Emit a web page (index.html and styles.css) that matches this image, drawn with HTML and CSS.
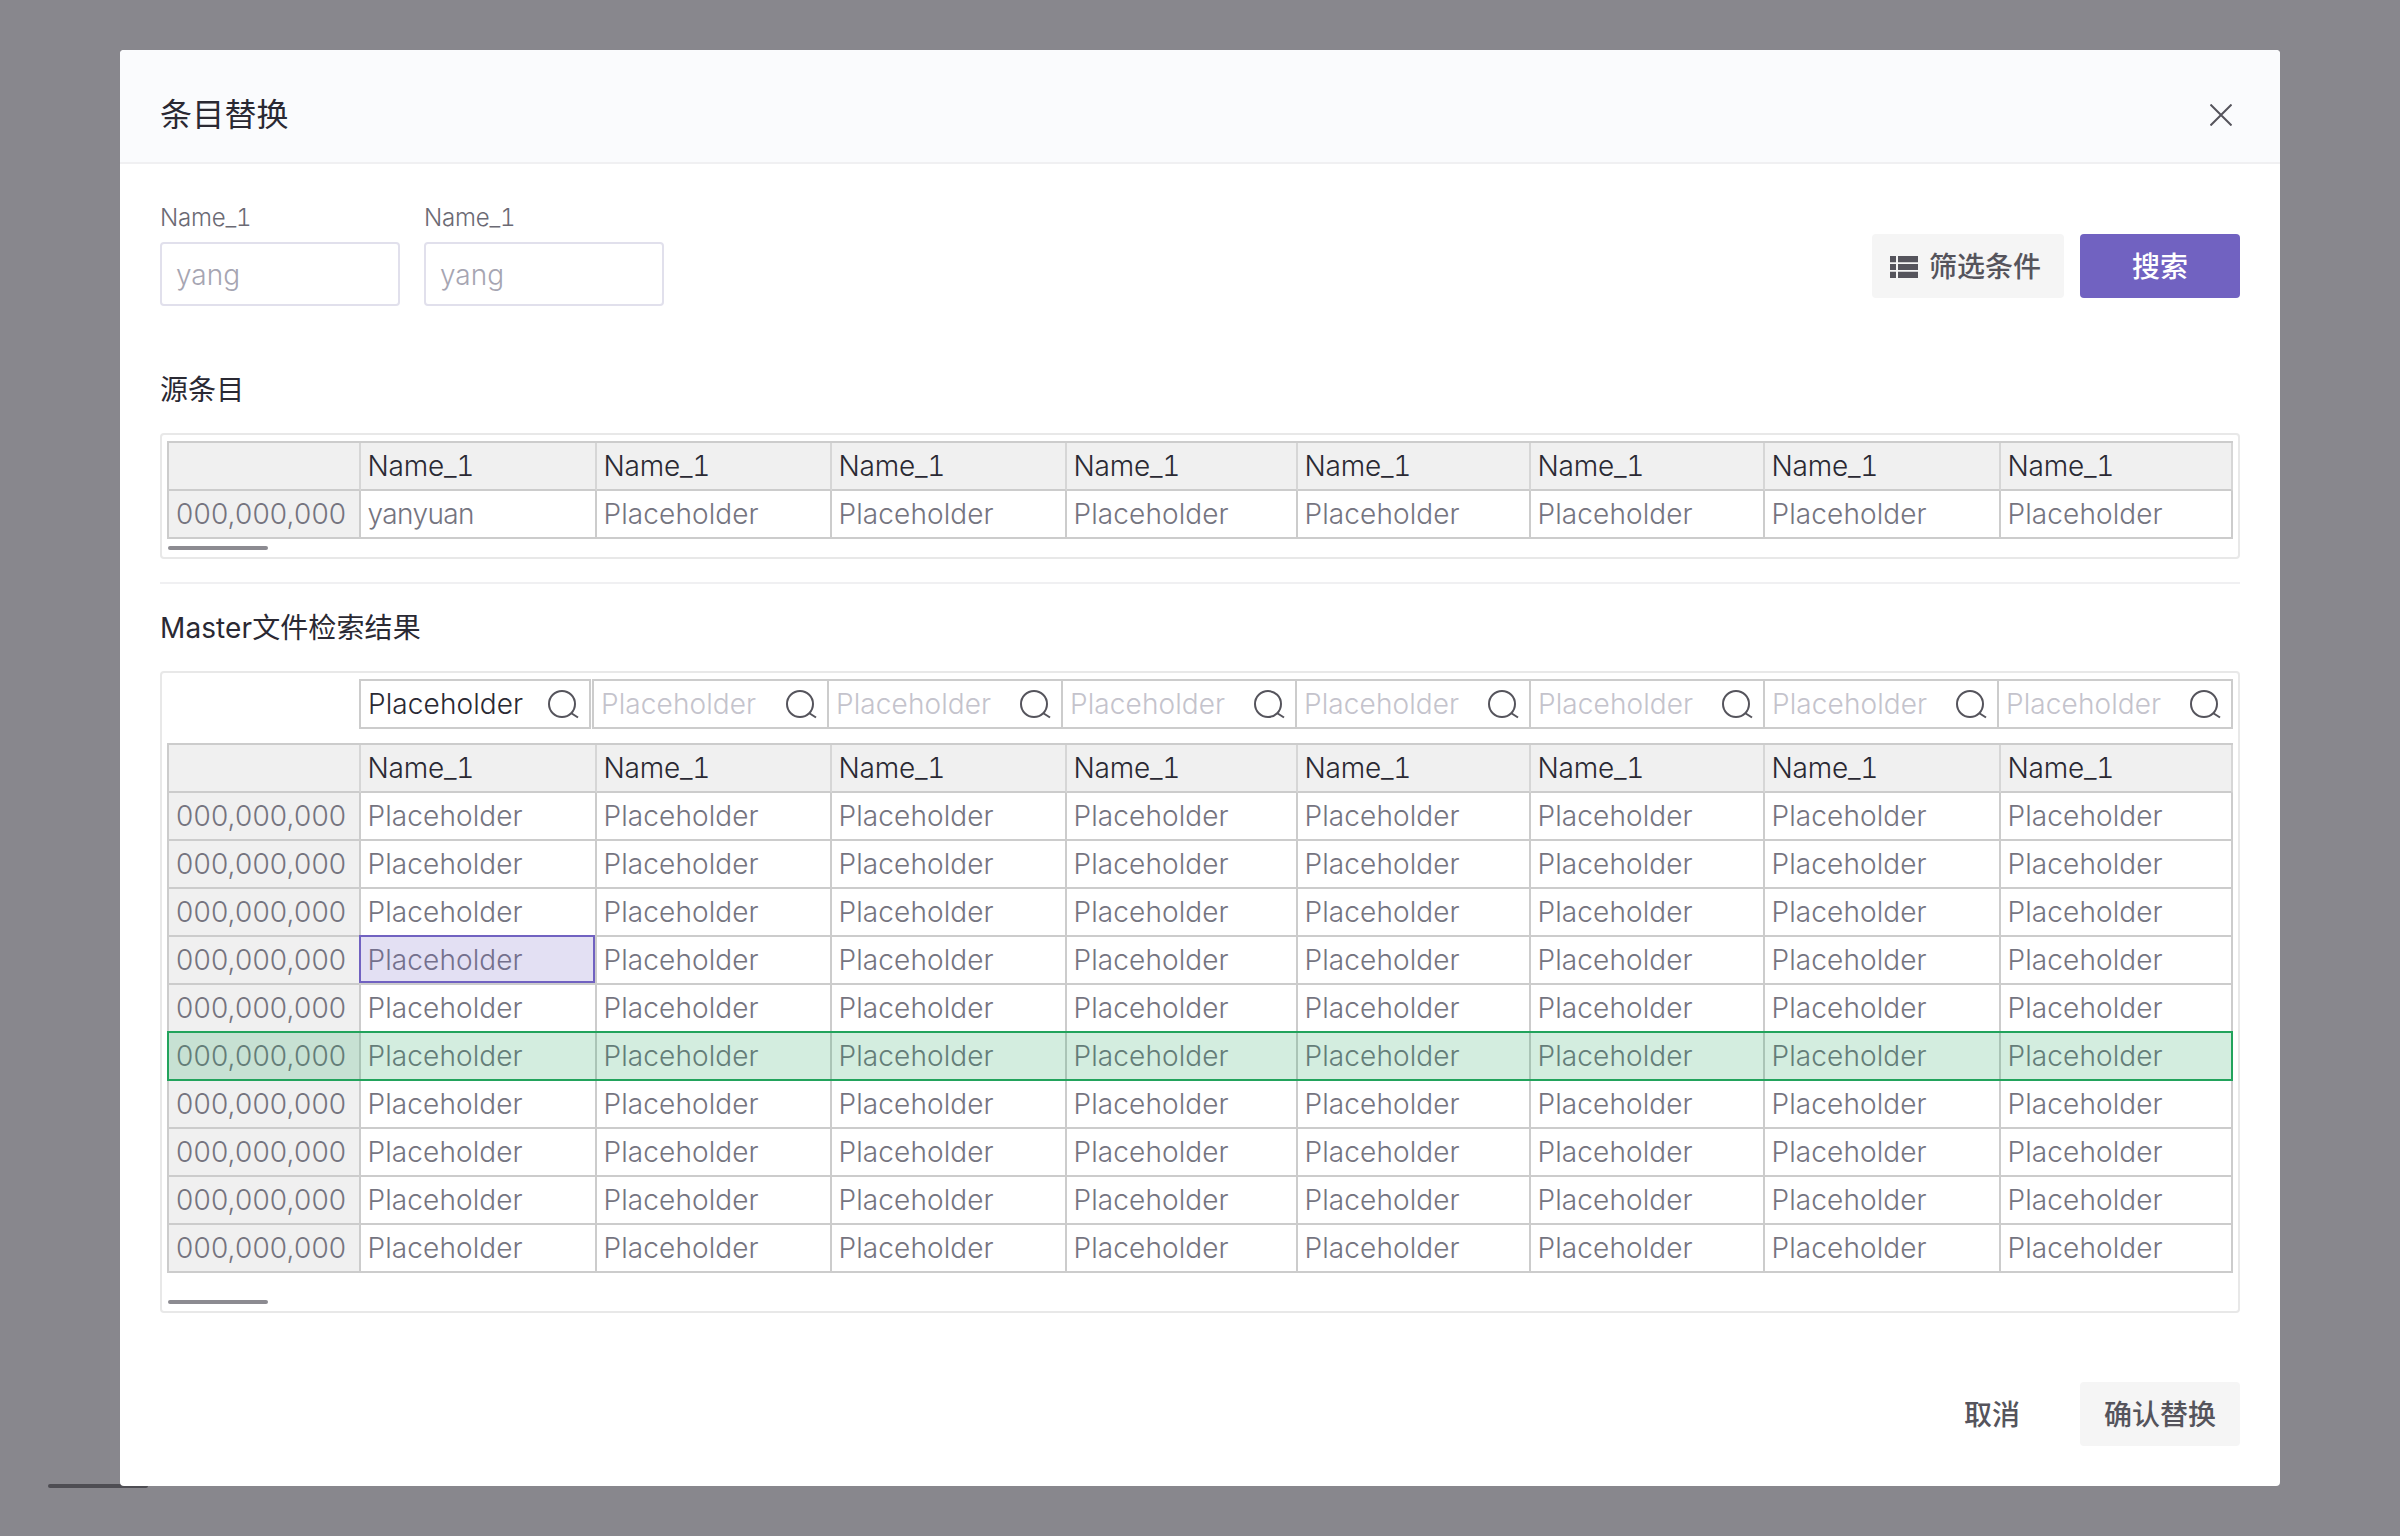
FILE: index.html
```html
<!DOCTYPE html>
<html lang="zh-CN">
<head>
<meta charset="utf-8">
<title>条目替换</title>
<link rel="stylesheet" href="styles.css">
</head>
<body>
<div class="page-scrollbar"></div>
<div class="backdrop">
  <section class="modal">
    <header class="modal-header">
      <h1 class="modal-title">条目替换</h1>
      <svg class="close-icon" width="22" height="22" viewBox="0 0 22 22"><path d="M0.5 0.5L21.5 21.5M21.5 0.5L0.5 21.5"/></svg>
    </header>
    <div class="modal-body">
      <div class="search-bar">
        <div class="fields">
          <label class="field"><span class="field-label">Name_1</span><input class="field-input" placeholder="yang"></label>
          <label class="field"><span class="field-label">Name_1</span><input class="field-input" placeholder="yang"></label>
        </div>
        <div class="search-actions">
          <button class="btn btn-filter"><svg class="list-icon" width="28" height="22" viewBox="0 0 28 22"><path d="M0 0h6v6.3H0zM8 0h20v6.3H8zM0 8h6v6H0zM8 8h20v6H8zM0 15.7h6V22H0zM8 15.7h20V22H8z"/></svg>筛选条件</button>
          <button class="btn btn-primary">搜索</button>
        </div>
      </div>

      <h2 class="section-title section-first">源条目</h2>
      <div class="table-card">
        <div class="table">
          <div class="row"><div class="cell head"></div><div class="cell head">Name_1</div><div class="cell head">Name_1</div><div class="cell head">Name_1</div><div class="cell head">Name_1</div><div class="cell head">Name_1</div><div class="cell head">Name_1</div><div class="cell head">Name_1</div><div class="cell head">Name_1</div></div>
          <div class="row"><div class="cell index">000,000,000</div><div class="cell cell-source">yanyuan</div><div class="cell">Placeholder</div><div class="cell">Placeholder</div><div class="cell">Placeholder</div><div class="cell">Placeholder</div><div class="cell">Placeholder</div><div class="cell">Placeholder</div><div class="cell">Placeholder</div></div>
        </div>
        <div class="scrollbar scrollbar-near"></div>
      </div>

      <hr class="divider">

      <h2 class="section-title">Master文件检索结果</h2>
      <div class="table-card">
        <div class="filters">
          <div class="filter filter-first filter-active"><span>Placeholder</span><svg class="search-icon" width="30" height="28" viewBox="0 0 30 28"><circle cx="14" cy="14" r="13"/><path d="M23 23L30 27.5"/></svg></div>
          <div class="filter"><span>Placeholder</span><svg class="search-icon" width="30" height="28" viewBox="0 0 30 28"><circle cx="14" cy="14" r="13"/><path d="M23 23L30 27.5"/></svg></div>
          <div class="filter"><span>Placeholder</span><svg class="search-icon" width="30" height="28" viewBox="0 0 30 28"><circle cx="14" cy="14" r="13"/><path d="M23 23L30 27.5"/></svg></div>
          <div class="filter"><span>Placeholder</span><svg class="search-icon" width="30" height="28" viewBox="0 0 30 28"><circle cx="14" cy="14" r="13"/><path d="M23 23L30 27.5"/></svg></div>
          <div class="filter"><span>Placeholder</span><svg class="search-icon" width="30" height="28" viewBox="0 0 30 28"><circle cx="14" cy="14" r="13"/><path d="M23 23L30 27.5"/></svg></div>
          <div class="filter"><span>Placeholder</span><svg class="search-icon" width="30" height="28" viewBox="0 0 30 28"><circle cx="14" cy="14" r="13"/><path d="M23 23L30 27.5"/></svg></div>
          <div class="filter"><span>Placeholder</span><svg class="search-icon" width="30" height="28" viewBox="0 0 30 28"><circle cx="14" cy="14" r="13"/><path d="M23 23L30 27.5"/></svg></div>
          <div class="filter filter-last"><span>Placeholder</span><svg class="search-icon" width="30" height="28" viewBox="0 0 30 28"><circle cx="14" cy="14" r="13"/><path d="M23 23L30 27.5"/></svg></div>
        </div>
        <div class="table">
          <div class="row"><div class="cell head"></div><div class="cell head">Name_1</div><div class="cell head">Name_1</div><div class="cell head">Name_1</div><div class="cell head">Name_1</div><div class="cell head">Name_1</div><div class="cell head">Name_1</div><div class="cell head">Name_1</div><div class="cell head">Name_1</div></div>
          <div class="row"><div class="cell index">000,000,000</div><div class="cell">Placeholder</div><div class="cell">Placeholder</div><div class="cell">Placeholder</div><div class="cell">Placeholder</div><div class="cell">Placeholder</div><div class="cell">Placeholder</div><div class="cell">Placeholder</div><div class="cell">Placeholder</div></div>
          <div class="row"><div class="cell index">000,000,000</div><div class="cell">Placeholder</div><div class="cell">Placeholder</div><div class="cell">Placeholder</div><div class="cell">Placeholder</div><div class="cell">Placeholder</div><div class="cell">Placeholder</div><div class="cell">Placeholder</div><div class="cell">Placeholder</div></div>
          <div class="row"><div class="cell index">000,000,000</div><div class="cell">Placeholder</div><div class="cell">Placeholder</div><div class="cell">Placeholder</div><div class="cell">Placeholder</div><div class="cell">Placeholder</div><div class="cell">Placeholder</div><div class="cell">Placeholder</div><div class="cell">Placeholder</div></div>
          <div class="row"><div class="cell index">000,000,000</div><div class="cell cell-selected">Placeholder</div><div class="cell">Placeholder</div><div class="cell">Placeholder</div><div class="cell">Placeholder</div><div class="cell">Placeholder</div><div class="cell">Placeholder</div><div class="cell">Placeholder</div><div class="cell">Placeholder</div></div>
          <div class="row"><div class="cell index">000,000,000</div><div class="cell">Placeholder</div><div class="cell">Placeholder</div><div class="cell">Placeholder</div><div class="cell">Placeholder</div><div class="cell">Placeholder</div><div class="cell">Placeholder</div><div class="cell">Placeholder</div><div class="cell">Placeholder</div></div>
          <div class="row row-match"><div class="cell index">000,000,000</div><div class="cell">Placeholder</div><div class="cell">Placeholder</div><div class="cell">Placeholder</div><div class="cell">Placeholder</div><div class="cell">Placeholder</div><div class="cell">Placeholder</div><div class="cell">Placeholder</div><div class="cell">Placeholder</div></div>
          <div class="row"><div class="cell index">000,000,000</div><div class="cell">Placeholder</div><div class="cell">Placeholder</div><div class="cell">Placeholder</div><div class="cell">Placeholder</div><div class="cell">Placeholder</div><div class="cell">Placeholder</div><div class="cell">Placeholder</div><div class="cell">Placeholder</div></div>
          <div class="row"><div class="cell index">000,000,000</div><div class="cell">Placeholder</div><div class="cell">Placeholder</div><div class="cell">Placeholder</div><div class="cell">Placeholder</div><div class="cell">Placeholder</div><div class="cell">Placeholder</div><div class="cell">Placeholder</div><div class="cell">Placeholder</div></div>
          <div class="row"><div class="cell index">000,000,000</div><div class="cell">Placeholder</div><div class="cell">Placeholder</div><div class="cell">Placeholder</div><div class="cell">Placeholder</div><div class="cell">Placeholder</div><div class="cell">Placeholder</div><div class="cell">Placeholder</div><div class="cell">Placeholder</div></div>
          <div class="row"><div class="cell index">000,000,000</div><div class="cell">Placeholder</div><div class="cell">Placeholder</div><div class="cell">Placeholder</div><div class="cell">Placeholder</div><div class="cell">Placeholder</div><div class="cell">Placeholder</div><div class="cell">Placeholder</div><div class="cell">Placeholder</div></div>
        </div>
        <div class="scrollbar scrollbar-far"></div>
      </div>

      <footer class="modal-footer">
        <button class="btn btn-ghost">取消</button>
        <button class="btn btn-confirm">确认替换</button>
      </footer>
    </div>
  </section>
</div>
</body>
</html>
```
FILE: styles.css
```css
* { box-sizing: border-box; }
html, body { margin: 0; height: 100%; }
body {
  background: #88878d;
  font-family: "Inter", "Noto Sans CJK SC", sans-serif;
  color: #2a2933;
  overflow: hidden;
}
.page-scrollbar {
  position: absolute;
  left: 48px;
  top: 1484px;
  width: 100px;
  height: 4px;
  border-radius: 2px;
  background: #4e4d53;
}
.backdrop {
  position: absolute;
  inset: 0;
  padding: 50px 120px;
  display: flex;
}
.modal {
  flex: 1;
  display: flex;
  flex-direction: column;
  background: #fff;
  border-radius: 4px;
  overflow: hidden;
}
.modal-header {
  height: 114px;
  flex: none;
  display: flex;
  align-items: center;
  justify-content: space-between;
  padding: 18px 48px 0 40px;
  background: #fafbfd;
  border-bottom: 2px solid #f0f0f2;
}
.modal-title { margin: 0; font-size: 32px; font-weight: 400; letter-spacing: 0.2px; line-height: 44px; color: #2a2933; }
.close-icon { display: block; fill: none; stroke: #55545c; stroke-width: 2; }

.modal-body { padding: 36px 40px 40px; display: flex; flex-direction: column; }
.search-bar { display: flex; justify-content: space-between; align-items: flex-end; }
.fields { display: flex; gap: 24px; }
.field { display: flex; flex-direction: column; gap: 6px; width: 240px; }
.field-label { font-size: 24px; line-height: 36px; font-weight: 300; font-variant-numeric: tabular-nums; letter-spacing: -0.2px; color: #6b6a74; }
.field-input {
  width: 100%;
  height: 64px;
  padding: 2px 14px 0;
  border: 2px solid #e1e0ec;
  border-radius: 4px;
  background: #fff;
  font: 300 28px "Inter", "Noto Sans CJK SC", sans-serif;
  color: #2a2933;
  outline: none;
}
.field-input::placeholder { color: #a6a5b2; opacity: 1; }
.search-actions { display: flex; gap: 16px; margin-bottom: 8px; }

.btn {
  height: 64px;
  border: 0;
  border-radius: 4px;
  padding: 0 0 2px;
  display: flex;
  align-items: center;
  justify-content: center;
  font: 500 28px "Inter", "Noto Sans CJK SC", sans-serif;
  color: #55545c;
  background: transparent;
}
.btn-filter { width: 192px; justify-content: flex-start; padding-left: 18px; gap: 11px; background: #f5f5f5; }
.list-icon { display: block; margin-top: 4px; fill: #55545c; }
.btn-primary { width: 160px; background: #7162c1; color: #fff; }
.btn-ghost { width: 144px; }
.btn-confirm { width: 160px; background: #f5f5f5; }

.section-title { margin: 24px 0 23px; font-size: 28px; font-weight: 400; letter-spacing: 0.1px; line-height: 40px; color: #2a2933; }
.section-first { margin-top: 64px; }
.divider { margin: 23px 0 0; border: 0; height: 2px; background: #f0f0f2; }

.table-card {
  border: 2px solid #e8e8e8;
  border-radius: 4px;
  padding: 6px 5px 7px;
}
.table { width: 2066px; border-top: 2px solid #ccc; border-left: 2px solid #ccc; }
.row {
  position: relative;
  display: grid;
  grid-template-columns: 192px 236px 235px 235px 231px 233px 234px 236px 232px;
}
.cell {
  position: relative;
  height: 48px;
  padding-left: 6.5px;
  display: flex;
  align-items: center;
  white-space: nowrap;
  border-right: 2px solid #ccc;
  border-bottom: 2px solid #ccc;
  font-size: 28px;
  font-weight: 300;
  letter-spacing: 0.1px;
  color: #75747f;
}
.head { background: #f0f0f0; color: #2a2933; border-right-color: #d6d6d6; font-variant-numeric: tabular-nums; letter-spacing: -0.2px; }
.index { background: #f0f0f0; padding-left: 7px; letter-spacing: 0.15px; }
.cell-source { letter-spacing: -0.6px; }
.cell-selected::after {
  content: "";
  position: absolute;
  inset: -2px 0 0 -2px;
  background: rgba(113, 98, 193, 0.2);
  border: 2px solid #7162c1;
}
.row-match::after {
  content: "";
  position: absolute;
  inset: -2px 0 0 -2px;
  background: rgba(33, 166, 93, 0.2);
  border: 2px solid #22a35c;
}

.filters {
  display: grid;
  width: 2066px;
  padding-left: 192px;
  grid-template-columns: 233px 235px 234px 234px 234px 234px 234px 236px;
  margin: 0 0 14px;
}
.filter {
  height: 50px;
  margin-right: -2px;
  padding: 0 11px 0 7px;
  display: flex;
  align-items: center;
  justify-content: space-between;
  border: 2px solid #ccc;
  font-size: 28px;
  font-weight: 300;
  letter-spacing: 0.1px;
  color: #c4c3cc;
}
.filter-first { margin-right: 1px; }
.filter-active { color: #2a2933; }
.filter-last { margin-right: 0; }
.search-icon { flex: none; display: block; fill: none; stroke: #55545c; stroke-width: 2; overflow: visible; }

.scrollbar { width: 100px; height: 4px; margin-left: 1px; border-radius: 2px; background: #8c8b91; }
.scrollbar-near { margin-top: 7px; }
.scrollbar-far { margin-top: 27px; }

.modal-footer { display: flex; justify-content: flex-end; gap: 16px; margin-top: 69px; }
```
